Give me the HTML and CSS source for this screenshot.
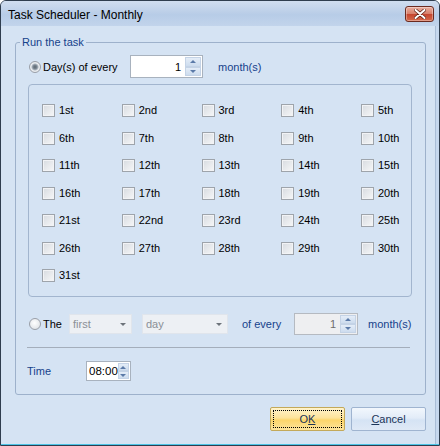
FILE: index.html
```html
<!DOCTYPE html>
<html>
<head>
<meta charset="utf-8">
<title>Task Scheduler - Monthly</title>
<link rel="stylesheet" href="styles.css">
</head>
<body>
<div class="window">
  <div class="titlebar">
    <span class="title">Task Scheduler - Monthly</span>
    <span class="close">
      <svg width="12" height="10" viewBox="0 0 12 10"><path d="M1.5 1 L10.5 9 M10.5 1 L1.5 9" stroke="#5a1e14" stroke-width="3.4" stroke-linecap="round"/><path d="M1.5 1 L10.5 9 M10.5 1 L1.5 9" stroke="#fff" stroke-width="2" stroke-linecap="round"/></svg>
    </span>
  </div>
  <div class="client">
    <fieldset class="group">
      <legend>Run the task</legend>
      <div class="row row-days">
        <span class="radio checked"></span>
        <span class="lbl lbl-days">Day(s) of every</span>
        <div class="spin spin-every">
          <span class="val">1</span>
          <span class="spinbtns"><span class="sb up"></span><span class="sb down"></span></span>
        </div>
        <span class="blue lbl-month">month(s)</span>
      </div>
      <div class="days-panel">
        <label class="day"><span class="cb"></span>1st</label>
        <label class="day"><span class="cb"></span>2nd</label>
        <label class="day"><span class="cb"></span>3rd</label>
        <label class="day"><span class="cb"></span>4th</label>
        <label class="day"><span class="cb"></span>5th</label>
        <label class="day"><span class="cb"></span>6th</label>
        <label class="day"><span class="cb"></span>7th</label>
        <label class="day"><span class="cb"></span>8th</label>
        <label class="day"><span class="cb"></span>9th</label>
        <label class="day"><span class="cb"></span>10th</label>
        <label class="day"><span class="cb"></span>11th</label>
        <label class="day"><span class="cb"></span>12th</label>
        <label class="day"><span class="cb"></span>13th</label>
        <label class="day"><span class="cb"></span>14th</label>
        <label class="day"><span class="cb"></span>15th</label>
        <label class="day"><span class="cb"></span>16th</label>
        <label class="day"><span class="cb"></span>17th</label>
        <label class="day"><span class="cb"></span>18th</label>
        <label class="day"><span class="cb"></span>19th</label>
        <label class="day"><span class="cb"></span>20th</label>
        <label class="day"><span class="cb"></span>21st</label>
        <label class="day"><span class="cb"></span>22nd</label>
        <label class="day"><span class="cb"></span>23rd</label>
        <label class="day"><span class="cb"></span>24th</label>
        <label class="day"><span class="cb"></span>25th</label>
        <label class="day"><span class="cb"></span>26th</label>
        <label class="day"><span class="cb"></span>27th</label>
        <label class="day"><span class="cb"></span>28th</label>
        <label class="day"><span class="cb"></span>29th</label>
        <label class="day"><span class="cb"></span>30th</label>
        <label class="day"><span class="cb"></span>31st</label>
      </div>
      <div class="row row-the">
        <span class="radio"></span>
        <span class="lbl lbl-the">The</span>
        <div class="combo combo-first"><span>first</span><span class="arrow"></span></div>
        <div class="combo combo-day"><span>day</span><span class="arrow"></span></div>
        <span class="blue lbl-ofevery">of every</span>
        <div class="spin spin-disabled">
          <span class="val">1</span>
          <span class="spinbtns"><span class="sb up"></span><span class="sb down"></span></span>
        </div>
        <span class="blue lbl-month2">month(s)</span>
      </div>
      <div class="sep"></div>
      <div class="row row-time">
        <span class="blue lbl-time">Time</span>
        <div class="spin spin-time">
          <span class="val">08:00</span>
          <span class="spinbtns"><span class="sb up"></span><span class="sb down"></span></span>
        </div>
      </div>
    </fieldset>
    <div class="buttons">
      <button class="btn btn-ok"><span class="focus">O<u>K</u></span></button>
      <button class="btn btn-cancel"><span><u>C</u>ancel</span></button>
    </div>
  </div>
</div>
</body>
</html>
```

FILE: styles.css
```css
* { box-sizing: border-box; }
html, body { margin: 0; padding: 0; background: #ffffff; }
body {
  font-family: "Liberation Sans", Arial, sans-serif;
  font-size: 11px;
  color: #000;
}
.window {
  width: 440px;
  height: 446px;
  border: 1px solid #2f3d4e;
  border-radius: 6px 6px 0 0;
  background: #c6d8ee;
  box-shadow: inset 0 -1px 0 #4cc4e6;
  display: flex;
  flex-direction: column;
  overflow: hidden;
}
.titlebar {
  height: 25px;
  flex: none;
  display: flex;
  align-items: center;
  justify-content: space-between;
  padding: 0 5px 0 7px;
  background: linear-gradient(#d0ddef, #bccfe8 45%, #b7cce7 55%, #c2d4eb);
}
.title {
  font-size: 12px;
  color: #000;
  margin-top: 2px;
}
.close {
  width: 29px;
  height: 16px;
  margin-top: 1px;
  border: 1px solid #6b2a1f;
  border-radius: 3px;
  background: linear-gradient(#e9ae9f, #d8806b 48%, #c5452f 52%, #d56a4c);
  box-shadow: inset 0 0 0 1px rgba(255,255,255,0.35);
  display: flex;
  align-items: center;
  justify-content: center;
}
.close svg { display: block; }
.client {
  flex: 1;
  margin: 0 3px 1px 0;
  background: #d5e3f3;
  border-right: 1px solid #a9bdd6;
  padding: 0 9px 0 14px;
}
.group {
  margin: 9px 0 0 0;
  padding: 6px 13px 13px 12px;
  border: 1px solid #9db1cb;
  border-radius: 3px;
  min-width: 0;
}
.group legend {
  padding: 0 2px;
  margin-left: -8px;
  line-height: 14px;
  color: #15428b;
  font-size: 11px;
}
.row {
  display: flex;
  align-items: center;
}
.blue { color: #15428b; }
.radio {
  flex: none;
  width: 12px;
  height: 12px;
  border-radius: 50%;
  border: 1px solid #9a9fa8;
  background: radial-gradient(circle at 45% 40%, #ffffff, #e3e6ea 70%, #d0d5dc);
  margin-right: 2px;
  position: relative;
}
.radio.checked {
  background: radial-gradient(circle, #5c6670 0, #7c8893 2px, #b6bec7 3.2px, #eef0f2 4px, #dde1e5 6px);
}
.row-days {
  height: 23px;
  padding-left: 1px;
}
.lbl-days { width: 87px; }
.lbl-month { margin-left: 15px; }
.spin {
  display: flex;
  align-items: stretch;
  border: 1px solid #a8b2be;
  background: #fff;
  padding: 1px;
}
.spin .val {
  flex: 1;
  display: flex;
  align-items: center;
  justify-content: flex-end;
  padding-right: 4px;
}
.spinbtns {
  width: 16px;
  display: flex;
  flex-direction: column;
  gap: 0;
}
.sb {
  flex: 1;
  background: linear-gradient(#e4edf8, #cddcee);
  border: 1px solid #c4d3e6;
  display: flex;
  align-items: center;
  justify-content: center;
}
.sb::after {
  content: "";
  width: 0;
  height: 0;
  border-left: 3px solid transparent;
  border-right: 3px solid transparent;
}
.sb.up::after { border-bottom: 3px solid #5b7aa8; }
.sb.down::after { border-top: 3px solid #5b7aa8; }
.spin-every {
  width: 73px;
  height: 23px;
}
.days-panel {
  margin-top: 6px;
  height: 213px;
  border: 1px solid #a2b5ce;
  border-radius: 4px;
  padding: 19px 0 0 13px;
  display: grid;
  grid-template-columns: repeat(5, 79.75px);
  grid-auto-rows: 13px;
  row-gap: 14.5px;
}
.day {
  display: flex;
  align-items: center;
  height: 13px;
  line-height: 13px;
}
.cb {
  width: 13px;
  height: 13px;
  border: 1px solid #9ea4ab;
  background: linear-gradient(135deg, #d7dbe0, #f6f7f8);
  box-shadow: inset 0 0 0 1px #f2f3f5;
  margin-right: 4px;
  flex: none;
}
.row-the {
  margin-top: 16px;
  height: 22px;
  padding-left: 1px;
}
.lbl-the { width: 26px; }
.combo {
  height: 20px;
  background: #edf0f4;
  border: 1px solid #e0e5ec;
  color: #8a8f96;
  display: flex;
  align-items: center;
  justify-content: space-between;
  padding: 0 5px 0 3px;
}
.combo .arrow {
  width: 0;
  height: 0;
  border-left: 3px solid transparent;
  border-right: 3px solid transparent;
  border-top: 3px solid #6d737a;
}
.combo-first { width: 63px; }
.combo-day { width: 86px; margin-left: 10px; }
.lbl-ofevery { margin-left: 14px; width: 52px; }
.spin-disabled {
  width: 64px;
  height: 22px;
  background: #eeeff1;
  border-color: #b5bac1;
  color: #6d6d6d;
}
.lbl-month2 { margin-left: 10px; }
.sep {
  margin: 12px 2px 0 -1px;
  height: 1px;
  background: #a4aebb;
}
.row-time {
  margin-top: 13px;
  height: 20px;
}
.lbl-time { margin-left: -1px; width: 59px; }
.spin-time {
  width: 45px;
  height: 20px;
}
.spin-time .val {
  justify-content: flex-start;
  padding: 0 0 0 1px;
  font-size: 11.5px;
}
.spin-time .spinbtns { width: 13px; }
.buttons {
  margin-top: 12px;
  display: flex;
  justify-content: flex-end;
  gap: 6px;
  padding-right: 0;
}
.btn {
  width: 75px;
  height: 24px;
  margin: 0;
  padding: 2px;
  font-family: "Liberation Sans", Arial, sans-serif;
  font-size: 11px;
  color: #1b3558;
  border-radius: 2px;
  display: flex;
  align-items: stretch;
  justify-content: stretch;
}
.btn span {
  flex: 1;
  display: flex;
  align-items: center;
  justify-content: center;
}
.btn u { text-decoration: underline; }
.btn-ok {
  border: 1px solid #c3a95a;
  background: linear-gradient(#fff3cc, #fde39a 45%, #fcd56a 55%, #fde49c);
}
.btn-ok .focus { border: 1px dotted #000; }
.btn-cancel {
  border: 1px solid #9fb4d0;
  background: linear-gradient(#f2f7fd, #e2ecf8 45%, #d5e3f4 55%, #dfe9f6);
}
```
